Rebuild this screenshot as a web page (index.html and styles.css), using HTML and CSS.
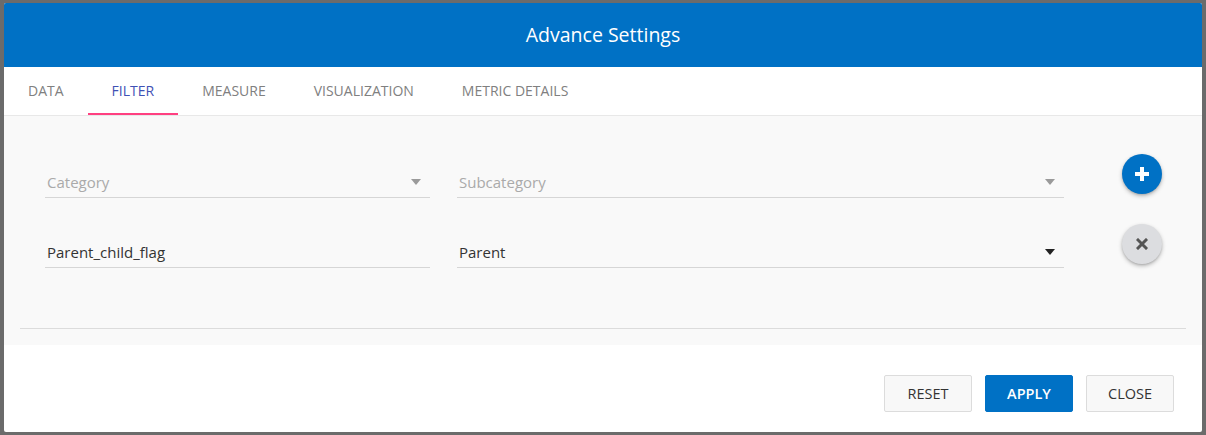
FILE: index.html
```html
<!DOCTYPE html>
<html lang="en">
<head>
<meta charset="utf-8">
<title>Advance Settings</title>
<link rel="stylesheet" href="styles.css">
</head>
<body>
<div class="modal">
  <header class="modal-header">Advance Settings</header>
  <nav class="tabs">
    <div class="tab">DATA</div>
    <div class="tab active">FILTER</div>
    <div class="tab">MEASURE</div>
    <div class="tab">VISUALIZATION</div>
    <div class="tab">METRIC DETAILS</div>
  </nav>
  <section class="content">
    <div class="row">
      <div class="field f1 placeholder"><span>Category</span><i class="caret"></i></div>
      <div class="field f2 placeholder"><span>Subcategory</span><i class="caret"></i></div>
      <button class="fab add" aria-label="Add">
        <svg width="14" height="14" viewBox="0 0 14 14"><path d="M5 0h4v5h5v4H9v5H5V9H0V5h5z" fill="#fff"/></svg>
      </button>
    </div>
    <div class="row">
      <div class="field f1 text"><span>Parent_child_flag</span></div>
      <div class="field f2 value"><span>Parent</span><i class="caret dark"></i></div>
      <button class="fab remove" aria-label="Remove">
        <svg width="12" height="12" viewBox="0 0 12 12"><path d="M2 2L10 10M10 2L2 10" stroke="#555" stroke-width="3" stroke-linecap="square"/></svg>
      </button>
    </div>
    <hr class="sep">
  </section>
  <footer class="modal-footer">
    <button class="btn">RESET</button>
    <button class="btn primary">APPLY</button>
    <button class="btn">CLOSE</button>
  </footer>
</div>
</body>
</html>
```

FILE: styles.css
```css
* { box-sizing: border-box; }
html, body { margin: 0; padding: 0; }
body {
  background: #6b6b6b;
  font-family: "Open Sans", "Noto Sans", sans-serif;
  height: 435px;
  overflow: hidden;
}
.modal {
  margin: 3px 4px 0 4px;
  width: 1198px;
  height: 429px;
  background: #fff;
  display: flex;
  flex-direction: column;
  border-radius: 2px;
  overflow: hidden;
}
.modal-header {
  height: 64px;
  background: #0071c5;
  color: #fff;
  font-size: 19.5px;
  display: flex;
  align-items: center;
  justify-content: center;
  padding-bottom: 2px;
}
.tabs {
  height: 49px;
  display: flex;
  border-bottom: 1px solid #e8e8e8;
  background: #fff;
}
.tab {
  height: 48px;
  padding: 0 24px;
  display: flex;
  align-items: center;
  font-size: 14px;
  color: #808080;
  border-bottom: 2px solid transparent;
  padding-top: 1px;
}
.tab.active {
  color: #3f51b5;
  border-bottom-color: #ff4081;
}
.content {
  background: #f9f9f9;
  height: 229px;
  padding: 38px 16px 0 16px;
}
.row {
  height: 70px;
  display: flex;
  align-items: flex-start;
  padding-left: 25px;
}
.field {
  margin-top: 13px;
  height: 31px;
  border-bottom: 1px solid #d6d6d6;
  display: flex;
  align-items: center;
  justify-content: space-between;
  padding: 0 9px 0 2px;
  font-size: 15px;
  color: #333;
}
.f1 { width: 385px; }
.f2 { width: 607px; margin-left: 27px; }
.placeholder { color: #aaa; }
.caret {
  width: 0;
  height: 0;
  border-left: 5.5px solid transparent;
  border-right: 5.5px solid transparent;
  border-top: 6px solid #9a9a9a;
}
.caret.dark { border-top-color: #222; }
.fab {
  width: 40px;
  height: 40px;
  border-radius: 50%;
  border: none;
  margin-left: 58px;
  display: flex;
  align-items: center;
  justify-content: center;
  padding: 0;
  box-shadow: 0 2px 4px rgba(0,0,0,0.25), 0 1px 2px rgba(0,0,0,0.12);
}
.fab.add { background: #0071c5; }
.fab.remove { background: #dcdde0; }
.sep {
  margin: 34px 0 0 0;
  border: none;
  border-top: 1px solid #dcdcdc;
  height: 0;
}
.modal-footer {
  flex: 1;
  display: flex;
  justify-content: flex-end;
  align-items: flex-start;
  gap: 13px;
  padding: 30px 28px 0 0;
}
.btn {
  width: 88px;
  height: 37px;
  border: 1px solid #dcdcdc;
  background: #f8f8f8;
  color: #333;
  font-family: "Open Sans", "Noto Sans", sans-serif;
  font-size: 14.5px;
  border-radius: 2px;
  padding: 0;
}
.btn.primary {
  background: #0071c5;
  border-color: #0071c5;
  color: #fff;
  font-weight: 600;
}
```
